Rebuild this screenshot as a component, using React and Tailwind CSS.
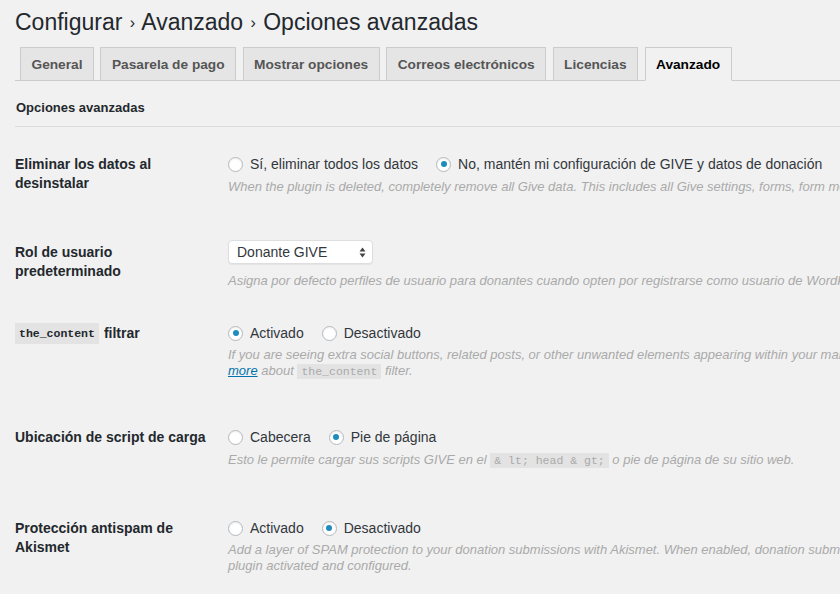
import React from "react";

const tabs = [
  "General",
  "Pasarela de pago",
  "Mostrar opciones",
  "Correos electrónicos",
  "Licencias",
  "Avanzado",
];

const Radio = ({ checked, label }) => (
  <label className="flex items-center gap-[7px] mr-[18px]">
    <span className="w-[15px] h-[15px] rounded-full bg-white border border-[#b4b9be] shadow-[inset_0_1px_2px_rgba(0,0,0,0.07)] flex items-center justify-center shrink-0">
      {checked && <span className="w-[6px] h-[6px] rounded-full bg-[#1e8cbe]" />}
    </span>
    <span className="text-[14px] text-[#32373c]">{label}</span>
  </label>
);

const Code = ({ children, dim }) => (
  <code
    className={`font-['Liberation_Mono',monospace] text-[11.5px] not-italic px-[4px] py-[1px] bg-[#e3e3e3] ${
      dim ? "text-[#aaa]" : "text-[#23282d] font-bold"
    }`}
  >
    {children}
  </code>
);

const Row = ({ label, children, className }) => (
  <div className={`flex ${className}`}>
    <div className="w-[213px] shrink-0 text-[14px] font-bold leading-[19px] text-[#23282d] whitespace-nowrap">
      {label}
    </div>
    <div className="flex-1 whitespace-nowrap">{children}</div>
  </div>
);

const Desc = ({ children, className = "" }) => (
  <p className={`text-[13px] italic leading-4 text-[#aaa] ${className}`}>{children}</p>
);

export default function App() {
  return (
    <div className="w-[840px] h-[594px] overflow-hidden bg-[#f1f1f1] font-['Liberation_Sans',Arial,sans-serif]">
      <div className="w-[1100px] pl-[15px]">
        <h1 className="pt-[8px] text-[23px] leading-[29px] text-[#23282d]">
          Configurar <span className="text-[16px] mx-[1px] align-[2px]">›</span> Avanzado{" "}
          <span className="text-[16px] mx-[1px] align-[2px]">›</span> Opciones avanzadas
        </h1>

        <nav className="flex items-end mt-[10px] pl-[5px] border-b border-[#ccc]">
          {tabs.map((t) => {
            const active = t === "Avanzado";
            return (
              <div
                key={t}
                className={`mr-[6.5px] px-[10.5px] pt-[2px] h-[34px] flex items-center border border-[#ccc] text-[13.7px] font-bold -mb-px ${
                  active
                    ? "bg-[#f1f1f1] text-[#000] border-b-[#f1f1f1]"
                    : "bg-[#e5e5e5] text-[#555]"
                }`}
              >
                {t}
              </div>
            );
          })}
        </nav>

        <div className="pt-[18px] pb-[10px] pl-[1px] text-[13px] font-bold text-[#23282d] leading-[17px] border-b border-[#dcdcdc]">
          Opciones avanzadas
        </div>

        <Row
          className="mt-[27px]"
          label={
            <div className="pt-[1px]">
              Eliminar los datos al
              <br />
              desinstalar
            </div>
          }
        >
          <div className="flex h-5 items-center">
            <Radio label="Sí, eliminar todos los datos" />
            <Radio checked label="No, mantén mi configuración de GIVE y datos de donación" />
          </div>
          <Desc className="mt-[5px]">
            When the plugin is deleted, completely remove all Give data. This includes all Give settings, forms, form
            meta, donor, donor data, donations. Everything.
          </Desc>
        </Row>

        <Row
          className="mt-[45px]"
          label={
            <div className="pt-[3px]">
              Rol de usuario
              <br />
              predeterminado
            </div>
          }
        >
          <div className="w-[145px] h-[24px] bg-white rounded-[4px] border border-[#dedede] shadow-[0_1px_1px_rgba(0,0,0,0.06)] flex items-center justify-between pl-[8px] pr-[6px]">
            <span className="text-[14px] text-[#32373c]">Donante GIVE</span>
            <svg width="7" height="11" viewBox="0 0 7 11">
              <path d="M3.5 0.5 L6.5 4.5 H0.5 Z" fill="#444" />
              <path d="M3.5 10.5 L6.5 6.5 H0.5 Z" fill="#444" />
            </svg>
          </div>
          <Desc className="mt-[9px]">
            Asigna por defecto perfiles de usuario para donantes cuando opten por registrarse como usuario de WordPress.
          </Desc>
        </Row>

        <Row
          className="mt-[34px]"
          label={
            <div className="h-5 flex items-center">
              <Code>the_content</Code>
              <span className="ml-[5px]">filtrar</span>
            </div>
          }
        >
          <div className="flex h-5 items-center">
            <Radio checked label="Activado" />
            <Radio label="Desactivado" />
          </div>
          <Desc className="mt-[4px]">
            If you are seeing extra social buttons, related posts, or other unwanted elements appearing within your main
            donation form content, you can disable this filter. Learn
          </Desc>
          <Desc>
            <span className="text-[#0073aa] underline">more</span> about <Code dim>the_content</Code> filter.
          </Desc>
        </Row>

        <Row
          className="mt-[47px]"
          label={<div className="h-5 flex items-center">Ubicación de script de carga</div>}
        >
          <div className="flex h-5 items-center">
            <Radio label="Cabecera" />
            <Radio checked label="Pie de página" />
          </div>
          <Desc className="mt-[5px]">
            Esto le permite cargar sus scripts GIVE en el <Code dim>&amp; lt; head &amp; gt;</Code> o pie de página de su
            sitio web.
          </Desc>
        </Row>

        <Row
          className="mt-[49px]"
          label={
            <div className="pt-[1px]">
              Protección antispam de
              <br />
              Akismet
            </div>
          }
        >
          <div className="flex h-5 items-center">
            <Radio label="Activado" />
            <Radio checked label="Desactivado" />
          </div>
          <Desc className="mt-[4px]">
            Add a layer of SPAM protection to your donation submissions with Akismet. When enabled, donation submissions
            will be first checked by Akismet for possible spam. Requires the Akismet
          </Desc>
          <Desc>plugin activated and configured.</Desc>
        </Row>
      </div>
    </div>
  );
}
